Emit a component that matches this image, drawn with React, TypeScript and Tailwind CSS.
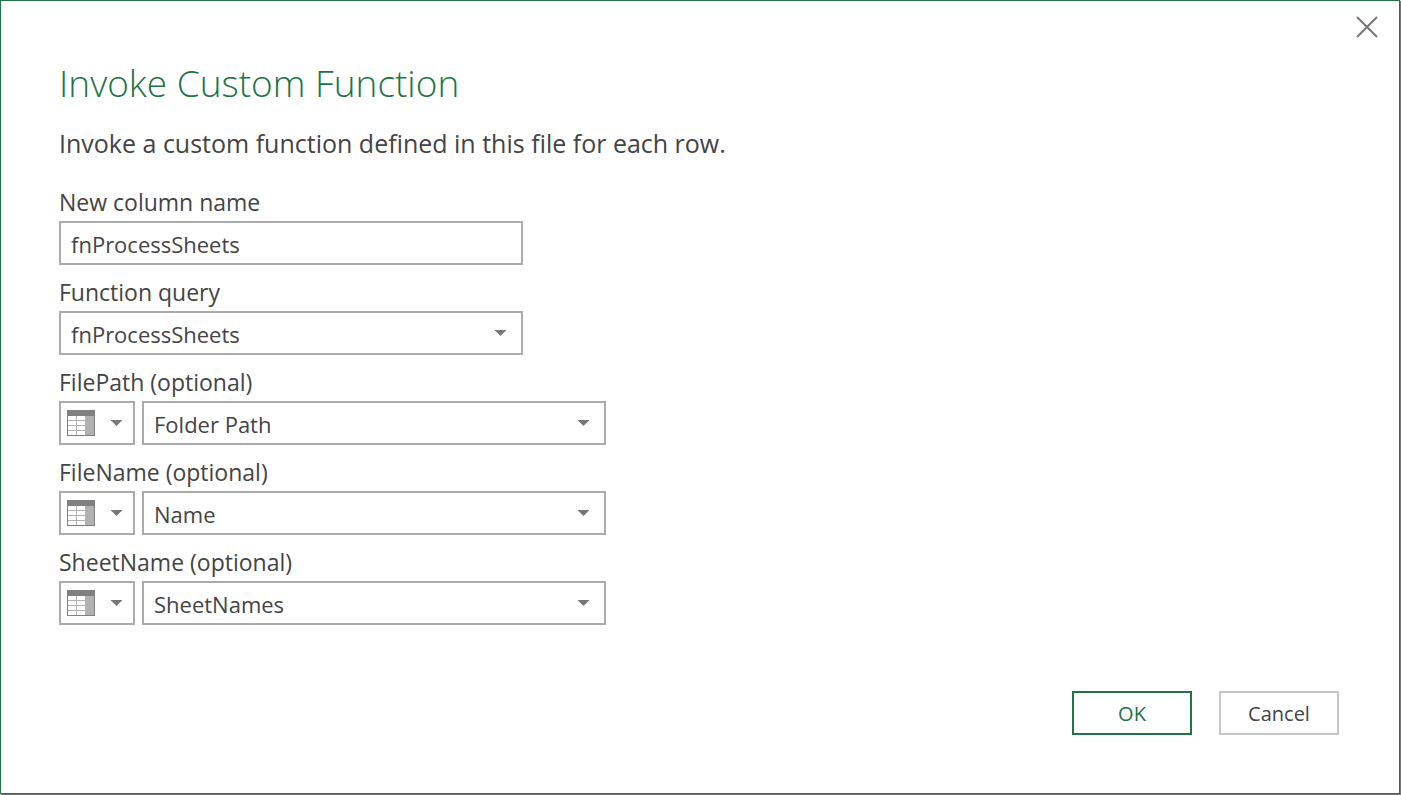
import { useState } from "react";
import type { ReactNode } from "react";

function Caret() {
  return (
    <svg aria-hidden="true" viewBox="0 0 11 6" className="h-[6px] w-[11px]">
      <path d="M0 0H11V0.6L5.5 6L0 0.6Z" fill="#777777" />
    </svg>
  );
}

function ColumnIcon() {
  return (
    <svg aria-hidden="true" viewBox="0 0 28 26" className="h-[26px] w-[28px]" shapeRendering="crispEdges">
      <rect width="28" height="26" fill="#808080" />
      <rect x="1" y="6" width="26" height="19" fill="#b1b1b1" />
      <path
        fill="#ffffff"
        d="M1 6h8v4H1zM10 6h8v4h-8zM1 11h8v4H1zM10 11h8v4h-8zM1 16h8v4H1zM10 16h8v4h-8zM1 21h8v4H1zM10 21h8v4h-8z"
      />
    </svg>
  );
}

function Field({ id, label, children }: { id: string; label: string; children: ReactNode }) {
  return (
    <div>
      <label htmlFor={id} className="block pb-0.5 text-[23px] leading-[34px]">
        {label}
      </label>
      {children}
    </div>
  );
}

function Select({ id, options }: { id: string; options: string[] }) {
  const [value, setValue] = useState(options[0]);
  return (
    <div className="relative w-full max-w-[464px]">
      <select
        id={id}
        value={value}
        onChange={(e) => setValue(e.target.value)}
        className="h-11 w-full appearance-none border-2 border-[#ababab] bg-white pt-0.5 pr-10 pl-2.5 text-[22px] outline-none"
      >
        {options.map((option) => (
          <option key={option}>{option}</option>
        ))}
      </select>
      <span className="pointer-events-none absolute inset-y-0 right-[17px] flex items-center">
        <Caret />
      </span>
    </div>
  );
}

function ParameterField({ name, column }: { name: string; column: string }) {
  const id = name.toLowerCase();
  return (
    <Field id={id} label={`${name} (optional)`}>
      <div className="flex gap-[7px]">
        <button
          type="button"
          aria-label={`${name} value type`}
          aria-haspopup="menu"
          className="flex h-11 w-[76px] shrink-0 items-center gap-4 border-2 border-[#ababab] bg-white pl-1.5"
        >
          <ColumnIcon />
          <Caret />
        </button>
        <Select id={id} options={[column]} />
      </div>
    </Field>
  );
}

export default function App() {
  const [columnName, setColumnName] = useState("fnProcessSheets");
  return (
    <div className="flex min-h-screen bg-white pr-px pb-px font-['Open_Sans','Noto_Sans',sans-serif] text-[#444444]">
      <main
        role="dialog"
        aria-labelledby="dialog-title"
        className="flex flex-1 flex-col border border-[#217346] bg-white shadow-[1px_1px_1px_#777777]"
      >
        <div className="flex h-[52px] justify-end pt-[15px] pr-[21px]">
          <button type="button" aria-label="Close" className="h-[22px] w-[22px]">
            <svg aria-hidden="true" viewBox="0 0 22 22" className="h-[22px] w-[22px]">
              <path d="M1 1L21 21M21 1L1 21" fill="none" stroke="#777777" strokeWidth="2" />
            </svg>
          </button>
        </div>
        <form
          onSubmit={(e) => e.preventDefault()}
          className="flex flex-1 flex-col pr-[60px] pb-[58px] pl-[58px]"
        >
          <h1 id="dialog-title" className="text-[37px] leading-[60px] font-light text-[#217346]">
            Invoke Custom Function
          </h1>
          <p className="text-[25px] leading-[60px]">Invoke a custom function defined in this file for each row.</p>
          <div className="mt-3 flex flex-col gap-2.5">
            <Field id="column-name" label="New column name">
              <input
                id="column-name"
                type="text"
                value={columnName}
                onChange={(e) => setColumnName(e.target.value)}
                className="block h-11 w-full max-w-[464px] border-2 border-[#ababab] bg-white px-2.5 pt-0.5 text-[22px] outline-none"
              />
            </Field>
            <Field id="function-query" label="Function query">
              <Select id="function-query" options={["fnProcessSheets"]} />
            </Field>
            <ParameterField name="FilePath" column="Folder Path" />
            <ParameterField name="FileName" column="Name" />
            <ParameterField name="SheetName" column="SheetNames" />
          </div>
          <div className="mt-auto flex justify-end gap-[27px] pt-6">
            <button type="submit" className="h-11 w-[120px] border-2 border-[#217346] bg-white pt-0.5 text-xl text-[#217346]">
              OK
            </button>
            <button type="button" className="h-11 w-[120px] border-2 border-[#c6c6c6] bg-white pt-0.5 text-xl">
              Cancel
            </button>
          </div>
        </form>
      </main>
    </div>
  );
}
